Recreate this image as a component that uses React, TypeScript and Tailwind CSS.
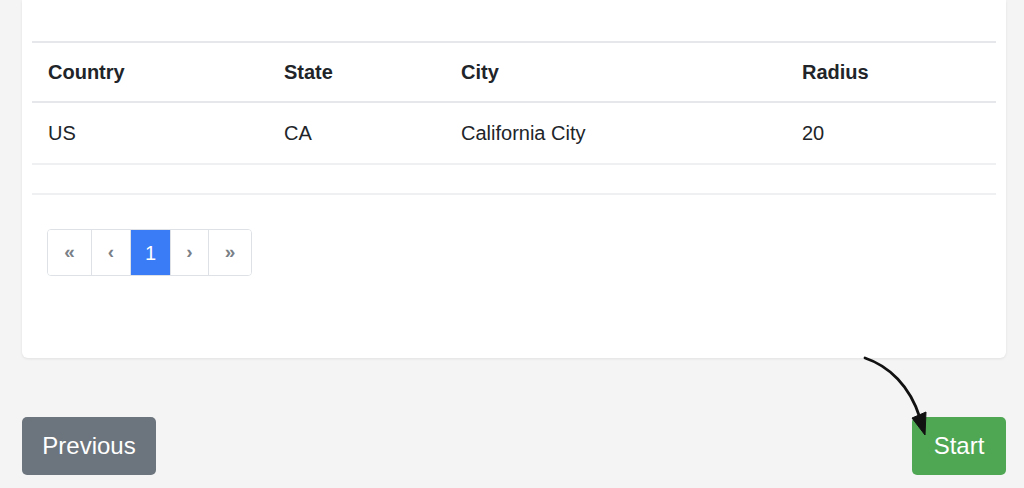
import { ReactNode } from "react"

const rows = [{ country: "US", state: "CA", city: "California City", radius: "20" }]

function PageItem({ children, active, className = "" }: { children: ReactNode; active?: boolean; className?: string }) {
  return (
    <div
      className={`flex h-full items-center justify-center border-r border-[#dee2e6] last:border-r-0 ${
        active ? "bg-[#3a7cf6] text-[20px] text-white" : "bg-white text-[19px] font-bold text-[#7a8087]"
      } ${className}`}
    >
      {children}
    </div>
  )
}

export default function App() {
  return (
    <div
      className="relative h-[488px] w-[1024px] overflow-hidden bg-[#f4f4f4] pl-[22px] pr-[18px] text-[#212529]"
      style={{ fontFamily: '"Liberation Sans", Arial, sans-serif' }}
    >
      {/* Card */}
      <div className="h-[358px] rounded-b-[6px] bg-white px-[10px] pt-[41px] shadow-[0_1px_3px_rgba(0,0,0,0.08)]">
        <table className="w-full border-collapse text-[20px] leading-[30px]">
          <thead>
            <tr className="border-t-2 border-b-2 border-[#e5e7ea]">
              <th className="w-[236px] px-[16px] py-[14px] text-left font-bold">Country</th>
              <th className="w-[177px] px-[16px] py-[14px] text-left font-bold">State</th>
              <th className="w-[341px] px-[16px] py-[14px] text-left font-bold">City</th>
              <th className="px-[16px] py-[14px] text-left font-bold">Radius</th>
            </tr>
          </thead>
          <tbody>
            {rows.map((r) => (
              <tr key={r.city} className="border-b-2 border-[#eef0f2]">
                <td className="px-[16px] py-[15px]">{r.country}</td>
                <td className="px-[16px] py-[15px]">{r.state}</td>
                <td className="px-[16px] py-[15px]">{r.city}</td>
                <td className="px-[16px] py-[15px]">{r.radius}</td>
              </tr>
            ))}
            <tr className="border-b-2 border-[#eef0f2]">
              <td colSpan={4} className="h-[30px] p-0"></td>
            </tr>
          </tbody>
        </table>

        {/* Pagination */}
        <div className="ml-[15px] mt-[34px] flex h-[47px] w-[205px] overflow-hidden rounded-[4px] border border-[#dee2e6]">
          <PageItem className="w-[44px]">«</PageItem>
          <PageItem className="w-[39px]">‹</PageItem>
          <PageItem active className="w-[40px]">1</PageItem>
          <PageItem className="w-[38px]">›</PageItem>
          <PageItem className="flex-1">»</PageItem>
        </div>
      </div>

      {/* Footer buttons */}
      <div className="mt-[59px] flex items-center justify-between">
        <button className="h-[58px] w-[134px] rounded-[5px] bg-[#6c757d] text-[24px] text-white">Previous</button>
        <button className="h-[58px] w-[94px] rounded-[5px] bg-[#4fa754] text-[24px] text-white">Start</button>
      </div>

      {/* Annotation arrow */}
      <svg className="absolute left-[855px] top-[350px]" width="90" height="90" viewBox="0 0 90 90" fill="none">
        <path d="M10 8 C 34 16, 55 36, 65 68" stroke="#111" strokeWidth="2.8" strokeLinecap="round" />
        <path d="M57 68 L71 62 L70 85 Z" fill="#111" stroke="#111" strokeWidth="1" strokeLinejoin="round" />
      </svg>
    </div>
  )
}
